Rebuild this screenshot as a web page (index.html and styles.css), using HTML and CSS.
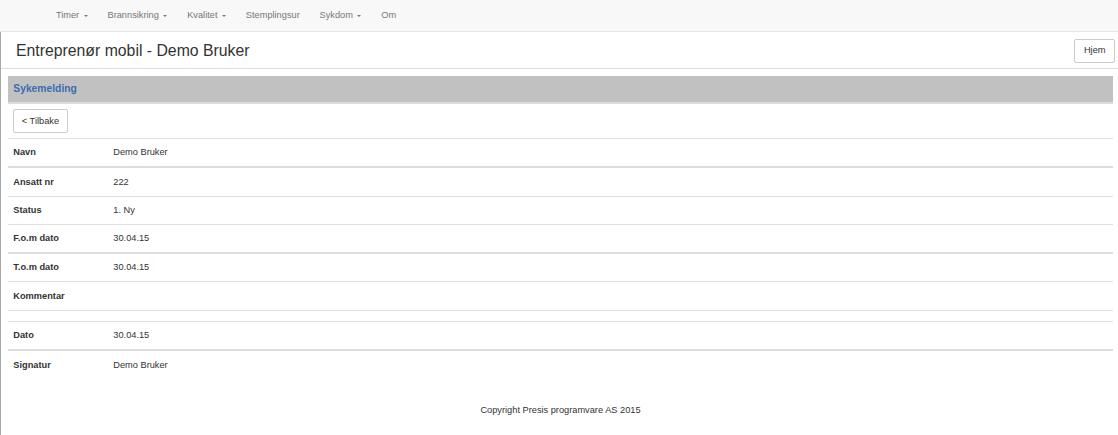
FILE: index.html
```html
<!DOCTYPE html>
<html lang="no">
<head>
<meta charset="utf-8">
<title>Entreprenør mobil - Sykemelding</title>
<link rel="stylesheet" href="styles.css">
</head>
<body>
<nav class="navbar">
  <ul class="nav">
    <li><a href="#">Timer <span class="caret"></span></a></li>
    <li><a href="#">Brannsikring <span class="caret"></span></a></li>
    <li><a href="#">Kvalitet <span class="caret"></span></a></li>
    <li><a href="#">Stemplingsur</a></li>
    <li><a href="#">Sykdom <span class="caret"></span></a></li>
    <li><a href="#">Om</a></li>
  </ul>
</nav>
<div class="page">
  <header class="header">
    <h1 class="title">Entreprenør mobil - Demo Bruker</h1>
    <a class="btn" href="#">Hjem</a>
  </header>
  <main class="content">
    <div class="panel-heading">Sykemelding</div>
    <div class="toolbar"><a class="btn" href="#">&lt; Tilbake</a></div>
    <table class="details">
      <tbody>
        <tr><th>Navn</th><td>Demo Bruker</td></tr>
      </tbody>
      <tbody>
        <tr><th>Ansatt nr</th><td>222</td></tr>
        <tr><th>Status</th><td>1. Ny</td></tr>
        <tr><th>F.o.m dato</th><td>30.04.15</td></tr>
      </tbody>
      <tbody>
        <tr><th>T.o.m dato</th><td>30.04.15</td></tr>
        <tr><th>Kommentar</th><td></td></tr>
        <tr class="empty"><th></th><td></td></tr>
        <tr><th>Dato</th><td>30.04.15</td></tr>
      </tbody>
      <tbody>
        <tr><th>Signatur</th><td>Demo Bruker</td></tr>
      </tbody>
    </table>
    <footer class="footer">Copyright Presis programvare AS 2015</footer>
  </main>
</div>
</body>
</html>
```
FILE: styles.css
```css
* { box-sizing: border-box; }
html, body { height: 100%; }
body {
  margin: 0;
  font-family: "Liberation Sans", Arial, sans-serif;
  font-size: 9.24px;
  color: #333;
  background: #fff;
  display: flex;
  flex-direction: column;
}
a { text-decoration: none; }

.navbar {
  height: 32px;
  background: #f8f8f8;
  border-bottom: 1px solid #e7e7e7;
  flex: none;
}
.nav {
  list-style: none;
  margin: 0;
  padding: 0 0 0 46px;
  display: flex;
  height: 31px;
}
.nav li { display: flex; }
.nav a {
  color: #777;
  padding: 0 9.9px;
  line-height: 31px;
  display: flex;
  align-items: center;
  white-space: pre;
}
.caret {
  display: inline-block;
  width: 0;
  height: 0;
  margin-left: 2px;
  border-top: 2.5px solid #777;
  border-left: 2.5px solid transparent;
  border-right: 2.5px solid transparent;
  margin-top: 1px;
}

.page {
  flex: 1;
  border-left: 1px solid #a8a8a8;
  display: flex;
  flex-direction: column;
}
.header {
  height: 37px;
  border-bottom: 1px solid #ddd;
  display: flex;
  align-items: center;
  justify-content: space-between;
  padding: 0 3px 0 15px;
}
.title {
  margin: 0;
  font-size: 15.8px;
  font-weight: normal;
  color: #333;
  line-height: 20px;
  padding-top: 2px;
}
.btn {
  display: inline-block;
  color: #333;
  background: #fff;
  border: 1px solid #ccc;
  border-radius: 2px;
  font-size: 9.24px;
  line-height: 13px;
  padding: 4px 9px 4px;
}
.header .btn { padding: 4.5px 8.5px; margin-top: 1px; }

.content {
  padding: 7px 5px 0 7px;
}
.panel-heading {
  background: #c1c1c1;
  border-bottom: 2px solid #dcdcdc;
  color: #3d6cb0;
  font-weight: bold;
  font-size: 10.3px;
  height: 28px;
  line-height: 26px;
  padding: 0 5.3px;
}
.toolbar {
  padding: 5px 5.3px 5px;
}
.toolbar .btn { padding: 4.5px 7.5px; }

.details {
  width: 100%;
  border-collapse: collapse;
}
.details tbody + tbody { border-top: 2px solid #ddd; }
.details th, .details td {
  border-top: 1px solid #e0e0e0;
  padding: 5.3px 5.3px;
  line-height: 16.65px;
  text-align: left;
  vertical-align: top;
  font-size: 9.24px;
}
.details th {
  width: 100px;
  font-weight: bold;
}
.details tbody + tbody tr:first-child th,
.details tbody + tbody tr:first-child td { border-top: 0; }
.details .empty th, .details .empty td {
  line-height: 0;
  padding: 5.3px;
  height: 11px;
}
.footer {
  text-align: center;
  margin-top: 23px;
  line-height: 16px;
  padding-bottom: 16px;
}
```
